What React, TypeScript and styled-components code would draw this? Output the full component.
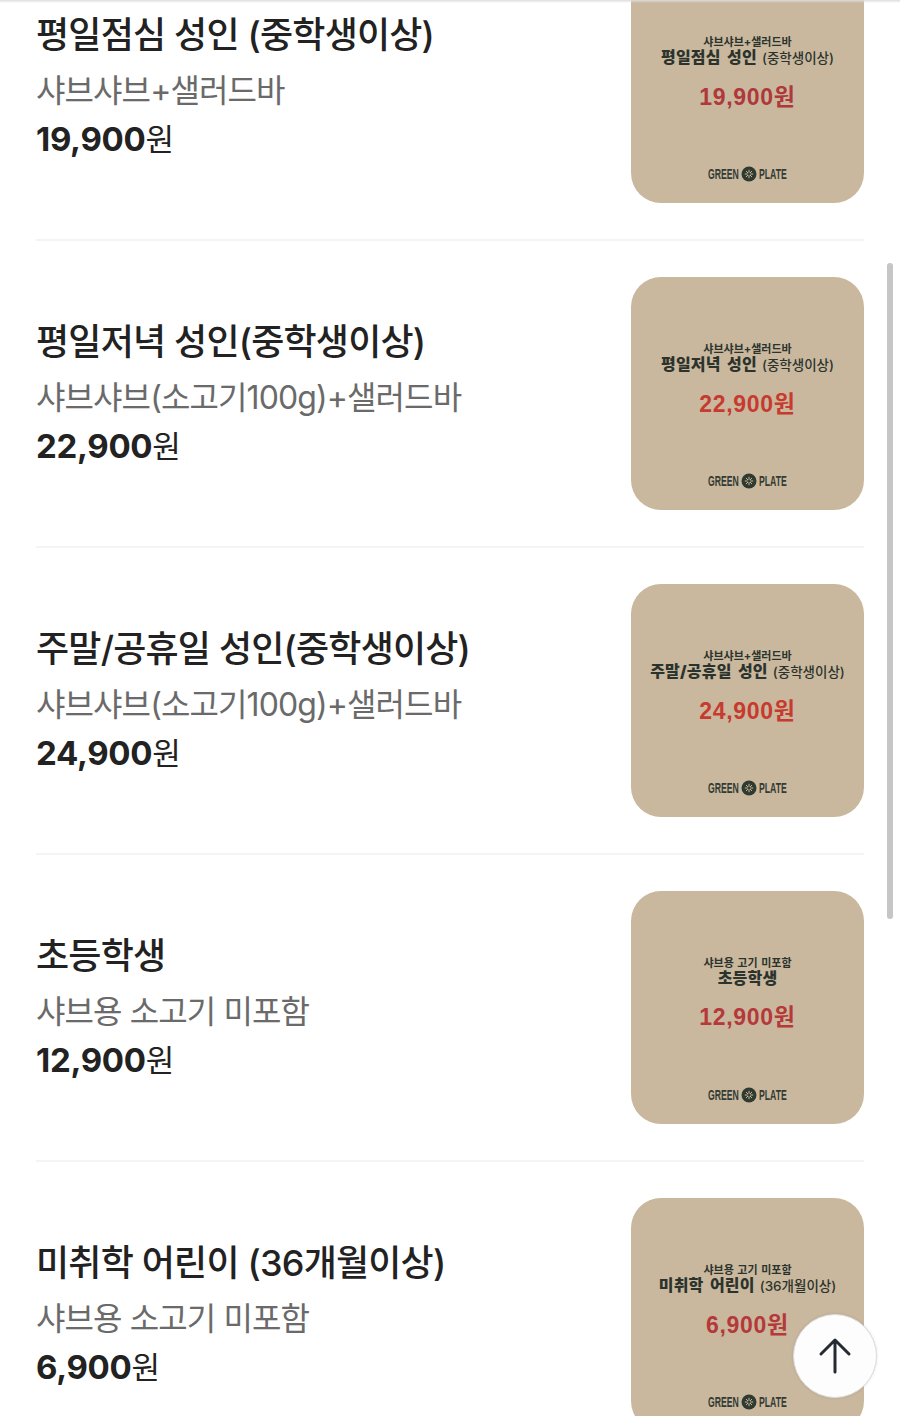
import styled, { createGlobalStyle } from 'styled-components'

const GlobalStyle = createGlobalStyle`
  html, body {
    margin: 0;
    padding: 0;
    height: 1416px;
    overflow: hidden;
    background: #fff;
    font-family: "Inter", "Noto Sans CJK KR", sans-serif;
  }
`

type Menu = {
  title: string
  desc: string
  price: string
  priceColor: string
  cardSub: string
  cardName: string
  cardNote?: string
}

const menus: Menu[] = [
  { title: '평일점심 성인 (중학생이상)', desc: '샤브샤브+샐러드바', price: '19,900', priceColor: '#ae383b', cardSub: '샤브샤브+샐러드바', cardName: '평일점심 성인', cardNote: '(중학생이상)' },
  { title: '평일저녁 성인(중학생이상)', desc: '샤브샤브(소고기100g)+샐러드바', price: '22,900', priceColor: '#c73a30', cardSub: '샤브샤브+샐러드바', cardName: '평일저녁 성인', cardNote: '(중학생이상)' },
  { title: '주말/공휴일 성인(중학생이상)', desc: '샤브샤브(소고기100g)+샐러드바', price: '24,900', priceColor: '#c73a30', cardSub: '샤브샤브+샐러드바', cardName: '주말/공휴일 성인', cardNote: '(중학생이상)' },
  { title: '초등학생', desc: '샤브용 소고기 미포함', price: '12,900', priceColor: '#b5383b', cardSub: '샤브용 고기 미포함', cardName: '초등학생' },
  { title: '미취학 어린이 (36개월이상)', desc: '샤브용 소고기 미포함', price: '6,900', priceColor: '#b5383b', cardSub: '샤브용 고기 미포함', cardName: '미취학 어린이', cardNote: '(36개월이상)' },
]

function PlateMark() {
  return (
    <svg width="16" height="16" viewBox="0 0 16 16">
      <circle cx="8" cy="8" r="7.5" fill="#2f3a31" />
      <g stroke="#c9b89c" strokeWidth="1" strokeLinecap="round">
        <path d="M8 4.2v2.2M8 9.6v2.2M4.2 8h2.2M9.6 8h2.2M5.3 5.3l1.5 1.5M9.2 9.2l1.5 1.5M10.7 5.3L9.2 6.8M6.8 9.2l-1.5 1.5" />
      </g>
    </svg>
  )
}

export default function App() {
  return (
    <Page>
      <GlobalStyle />
      <List>
        {menus.map((menu) => (
          <Row key={menu.title}>
            <Info>
              <Title>{menu.title}</Title>
              <Desc>{menu.desc}</Desc>
              <Price>
                <strong>{menu.price}</strong>원
              </Price>
            </Info>
            <Card>
              <CardSub>{menu.cardSub}</CardSub>
              <CardName>
                {menu.cardName}
                {menu.cardNote && <CardNote>{menu.cardNote}</CardNote>}
              </CardName>
              <CardPrice $color={menu.priceColor}>{menu.price}원</CardPrice>
              <Brand>
                <BrandWord $width={31}>GREEN</BrandWord>
                <PlateMark />
                <BrandWord $width={28}>PLATE</BrandWord>
              </Brand>
            </Card>
          </Row>
        ))}
      </List>
      <TopShade />
      <ScrollThumb />
      <TopButton aria-label="맨 위로">
        <svg width="34" height="38" viewBox="0 0 34 38" fill="none" stroke="#262a33" strokeWidth="3" strokeLinecap="round" strokeLinejoin="round">
          <path d="M17 35V3M3 17L17 3l14 14" />
        </svg>
      </TopButton>
    </Page>
  )
}

const Page = styled.div`
  position: relative;
  width: 900px;
  height: 1416px;
  overflow: hidden;
  background: #fff;
`

const List = styled.div`
  margin-top: -66px;
  padding: 0 36px;
`

const Row = styled.div`
  display: flex;
  align-items: center;
  justify-content: space-between;
  padding: 36px 0;
  border-bottom: 2px solid #f4f4f4;
`

const Info = styled.div`
  display: flex;
  flex-direction: column;
  margin-bottom: 2px;
`

const Title = styled.div`
  font-size: 36px;
  line-height: 52px;
  font-weight: 500;
  color: #222;
  letter-spacing: -0.8px;
`

const Desc = styled.div`
  margin-top: 7px;
  font-size: 32px;
  line-height: 46px;
  font-weight: 400;
  color: #6a6a6a;
  letter-spacing: -0.9px;
`

const Price = styled.div`
  margin-top: 2px;
  font-size: 31px;
  line-height: 46px;
  font-weight: 400;
  color: #222;
  strong {
    font-weight: 700;
    font-size: 33px;
    letter-spacing: -0.3px;
  }
`

const Card = styled.div`
  flex: none;
  display: flex;
  flex-direction: column;
  align-items: center;
  box-sizing: border-box;
  width: 233px;
  height: 233px;
  padding-top: 65px;
  border-radius: 30px;
  background: #c9b89d;
  color: #2c332d;
`

const CardSub = styled.div`
  font-size: 11px;
  line-height: 14px;
  font-weight: 700;
  word-spacing: 1px;
`

const CardName = styled.div`
  font-size: 16px;
  line-height: 17px;
  font-weight: 900;
  letter-spacing: 0.2px;
  word-spacing: 3px;
  white-space: nowrap;
`

const CardNote = styled.span`
  margin-left: 5px;
  font-size: 13.5px;
  font-weight: 500;
  letter-spacing: 0;
`

const CardPrice = styled.div<{ $color: string }>`
  margin-top: 15px;
  font-family: "Liberation Sans", "Noto Sans CJK KR", sans-serif;
  font-size: 23px;
  line-height: 30px;
  font-weight: 700;
  letter-spacing: 0.7px;
  color: ${(p) => p.$color};
`

const Brand = styled.div`
  display: flex;
  align-items: center;
  gap: 2px;
  margin-top: auto;
  margin-bottom: 21px;
`

const BrandWord = styled.span<{ $width: number }>`
  width: ${(p) => p.$width}px;
  font-family: "Liberation Sans", sans-serif;
  font-size: 14px;
  font-weight: 700;
  color: #333b34;
  white-space: nowrap;
  transform: scaleX(0.62);
  transform-origin: left;
`

const TopShade = styled.div`
  position: absolute;
  top: 0;
  left: 0;
  right: 0;
  height: 3px;
  background: linear-gradient(#dcdcdc, rgba(255, 255, 255, 0));
`

const ScrollThumb = styled.div`
  position: absolute;
  top: 263px;
  right: 7px;
  width: 6px;
  height: 656px;
  border-radius: 3px;
  background: #c6c6c6;
`

const TopButton = styled.button`
  position: absolute;
  top: 1314px;
  left: 793px;
  display: flex;
  align-items: center;
  justify-content: center;
  width: 84px;
  height: 84px;
  padding: 0;
  border: 1px solid #dcdcdc;
  border-radius: 50%;
  background: #fdfdfd;
  box-shadow: 0 0 3px rgba(0, 0, 0, 0.12);
`
